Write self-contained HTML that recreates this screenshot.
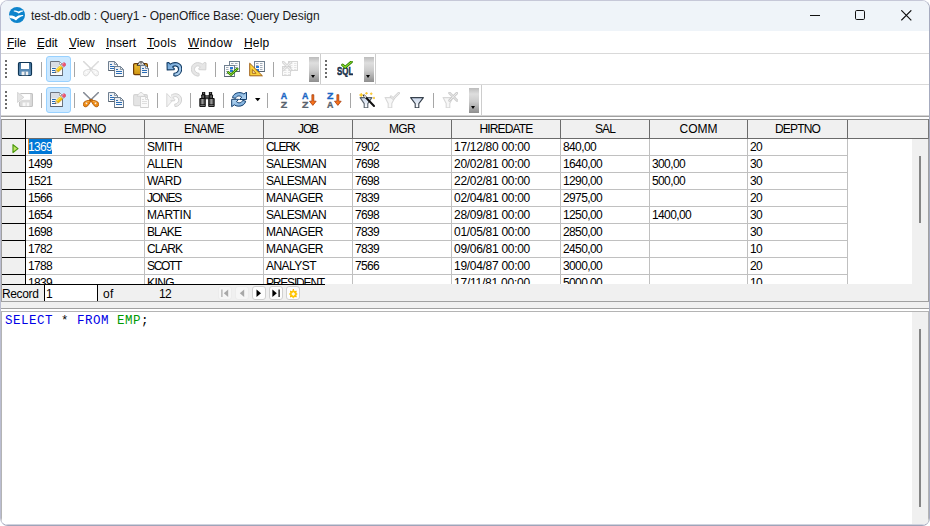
<!DOCTYPE html>
<html>
<head>
<meta charset="utf-8">
<title>test-db.odb : Query1 - OpenOffice Base: Query Design</title>
<style>
*{box-sizing:border-box;margin:0;padding:0}
html,body{width:930px;height:526px;overflow:hidden;background:#fff}
body{font-family:"Liberation Sans",sans-serif;font-size:12px;color:#000;position:relative}
.abs{position:absolute}
#win{position:absolute;left:0;top:0;width:930px;height:526px;border:1px solid #bdc0d3;border-color:#c6c8d8 #a6abbf #9fa4b9 #babdd1;border-radius:8px;overflow:hidden;background:#fff}
#in{position:absolute;left:-1px;top:-1px;width:930px;height:526px}
#title{position:absolute;left:0;top:0;width:930px;height:31px;background:#eff4f9}
.tx{position:absolute;white-space:nowrap;line-height:14px;font-size:12px;height:14px}
.hl{position:absolute;height:1px}
.vl{position:absolute;width:1px}
.tbtn{position:absolute;width:25px;height:26px;border:1px solid #98d1ff;background:#cce8ff;border-radius:3px}
.sep{position:absolute;width:1px;height:15px;background:#a6a6a6}
.dot{position:absolute;width:2px;height:2px;background:#6c6c6c}
.more{position:absolute;width:10px;height:25px;background:linear-gradient(#bcbcbc,#dedede 24%,#cbcbcb 55%,#8e8e8e)}
.more i{position:absolute;left:1.6px;top:18px;width:0;height:0;border-left:2.8px solid transparent;border-right:2.8px solid transparent;border-top:3px solid #000}
.hd{position:absolute;top:120px;height:18px;background:#f0f0f0;border-right:1px solid #6b6b6b;text-align:center;line-height:18px;font-size:12px;white-space:nowrap;padding-top:0}
.nb{position:absolute;top:286px;width:14px;height:14px;border-radius:3px}
.nb.en{background:#fdfdfd;border:1px solid #d0d0d0}
.nb.dis{background:#f6f6f6;border:1px solid #ececec}
#sqlt{position:absolute;left:5px;top:313px;font-family:"Liberation Mono",monospace;font-size:12.5px;letter-spacing:0.5px;line-height:16px;white-space:pre}
</style>
</head>
<body>
<div id="win"><div id="in">
<svg width="0" height="0" style="position:absolute"><defs>
<linearGradient id="gBlue" x1="0" y1="0" x2="0" y2="1"><stop offset="0" stop-color="#3f6f98"/><stop offset="1" stop-color="#6b9cc6"/></linearGradient>
<linearGradient id="gUndo" x1="0" y1="0" x2="1" y2="1"><stop offset="0" stop-color="#6aa2d6"/><stop offset="1" stop-color="#bcdaf4"/></linearGradient>
<linearGradient id="gGold" x1="0" y1="0" x2="0" y2="1"><stop offset="0" stop-color="#f0c23a"/><stop offset="1" stop-color="#cf9410"/></linearGradient>
<linearGradient id="gMore" x1="0" y1="0" x2="0" y2="1"><stop offset="0" stop-color="#9a9a9a"/><stop offset="0.55" stop-color="#d2d2d2"/><stop offset="1" stop-color="#858585"/></linearGradient>
<linearGradient id="gDoc" x1="0" y1="0" x2="0" y2="1"><stop offset="0" stop-color="#e4e8ee"/><stop offset="1" stop-color="#ffffff"/></linearGradient>
<linearGradient id="gFun" x1="0" y1="0" x2="0" y2="1"><stop offset="0" stop-color="#c9d6ea"/><stop offset="1" stop-color="#ffffff"/></linearGradient>
<linearGradient id="gBino" x1="0" y1="0" x2="1" y2="0"><stop offset="0" stop-color="#3a3a3a"/><stop offset="0.45" stop-color="#9c9c9c"/><stop offset="1" stop-color="#3c3c3c"/></linearGradient>
</defs></svg>
<div id="title"></div>
<svg class="abs" style="left:9px;top:7px" width="16" height="16" viewBox="0 0 16 16" ><clipPath id="lc"><circle cx="8" cy="8" r="8"/></clipPath><circle cx="8" cy="8" r="8" fill="#0e84cc"/><g clip-path="url(#lc)"><path d="M4.800 3.600C6.600 3.500 8.200 3.900 9.300 4.600 10.400 3.900 12 3.400 14.100 3.500L14 4.400C12.400 4.700 10.900 5.400 9.600 6.600 8.600 5.500 6.900 4.700 4.800 4.500z" fill="#fff"/><path d="M-0.500 8.600C2.500 8.100 5.400 8.700 6.800 10.200 8.600 8.600 11 7.800 14.300 8.100L14 9C11.800 9.500 9.400 10.900 7 13.400 5.400 11.900 2.600 11 -0.500 10.900z" fill="#fff"/></g></svg>
<span class="tx" style="left:31px;top:9px;letter-spacing:-0.053px;color:#1b1b1b">test-db.odb : Query1 - OpenOffice Base: Query Design</span>
<svg class="abs" style="left:810px;top:15px" width="10" height="1" viewBox="0 0 10 1" ><path d="M0 .5h10" stroke="#111" stroke-width="1"/></svg>
<svg class="abs" style="left:855px;top:10px" width="10" height="10" viewBox="0 0 10 10" ><rect x=".5" y=".5" width="9" height="9" rx="1.200" fill="none" stroke="#111" stroke-width="1"/></svg>
<svg class="abs" style="left:901px;top:10px" width="11" height="11" viewBox="0 0 11 11" ><path d="M.3 .3 10.300 10.300M10.300 .3 .3 10.300" stroke="#111" stroke-width="1.200"/></svg>
<span class="tx" style="left:7px;top:36px;letter-spacing:-0.059px">File</span>
<div class="hl" style="left:7px;top:48px;width:7px;background:#000"></div>
<span class="tx" style="left:37px;top:36px;letter-spacing:-0.019px">Edit</span>
<div class="hl" style="left:37px;top:48px;width:7px;background:#000"></div>
<span class="tx" style="left:69px;top:36px;letter-spacing:-0.048px">View</span>
<div class="hl" style="left:69px;top:48px;width:7px;background:#000"></div>
<span class="tx" style="left:106px;top:36px;letter-spacing:-0.002px">Insert</span>
<div class="hl" style="left:106px;top:48px;width:3px;background:#000"></div>
<span class="tx" style="left:147px;top:36px;letter-spacing:0.317px">Tools</span>
<div class="hl" style="left:147px;top:48px;width:7px;background:#000"></div>
<span class="tx" style="left:188px;top:36px;letter-spacing:0.303px">Window</span>
<div class="hl" style="left:188px;top:48px;width:11px;background:#000"></div>
<span class="tx" style="left:244px;top:36px;letter-spacing:0.205px">Help</span>
<div class="hl" style="left:244px;top:48px;width:8px;background:#000"></div>
<div class="hl" style="left:1px;top:53px;width:928px;background:#d9d9d9"></div>
<div class="hl" style="left:1px;top:84px;width:928px;background:#d9d9d9"></div>
<div class="hl" style="left:1px;top:115px;width:928px;background:#d4d4d4"></div>
<div class="hl" style="left:1px;top:116px;width:928px;background:#a0a0a0"></div>
<div class="vl" style="left:320px;top:54px;height:30px;background:#cdcdcd"></div>
<div class="vl" style="left:375px;top:54px;height:30px;background:#cdcdcd"></div>
<div class="vl" style="left:481px;top:85px;height:30px;background:#cdcdcd"></div>
<div class="dot" style="left:5px;top:60px"></div>
<div class="dot" style="left:5px;top:64px"></div>
<div class="dot" style="left:5px;top:68px"></div>
<div class="dot" style="left:5px;top:72px"></div>
<div class="dot" style="left:5px;top:76px"></div>
<svg class="abs" style="left:17px;top:61px" width="16" height="16" viewBox="0 0 16 16" ><rect x="1.5" y="1.5" width="13" height="13" rx="1.2" fill="url(#gBlue)" stroke="#0f3554" stroke-width="1.2"/>
<rect x="4" y="2" width="8" height="6" fill="#fff"/>
<rect x="4.6" y="10.6" width="6.6" height="3.6" fill="#f2f2f2"/>
<rect x="7.6" y="10.6" width="1" height="3.6" fill="#3d6d96"/></svg>
<div class="sep" style="left:41px;top:62px"></div>
<div class="tbtn" style="left:46px;top:56px"></div>
<svg class="abs" style="left:50px;top:61px" width="16" height="16" viewBox="0 0 16 16" ><path d="M0.500 0.500h9l3 3v11H0.500z" fill="#f9fafb" stroke="#6d7480"/>
<path d="M1 1h8v5.500H1z" fill="#d9dde4"/>
<path d="M9.500 0.500v3h3z" fill="#fff" stroke="#8a909a" stroke-width=".7"/>
<path d="M0.300 14.500h12.400" stroke="#59606b" stroke-width="1.200"/>
<path d="M2 7.500h3.800M2 9.500h3.500M2 11.500h3" stroke="#2468b2" stroke-width="1.100"/><path d="M5.00 11.70 6.04 8.39 8.40 10.98z" fill="#ecdcb8" stroke="#b89a60" stroke-width=".4"/><path d="M5.00 11.70 5.38 10.48 6.25 11.44z" fill="#111"/><path d="M6.04 8.39 10.63 4.21 12.98 6.80 8.40 10.98z" fill="#f2bd00" stroke="#b88600" stroke-width=".4"/><path d="M7.29 9.75 11.87 5.58 11.74 5.43 7.15 9.61z" fill="none"/><path d="M6.18 8.53 10.76 4.36 11.67 5.36 7.08 9.53z" fill="#ffe24a"/><path d="M10.63 4.21 11.66 3.27 14.02 5.86 12.98 6.80z" fill="#eef0f3" stroke="#9aa0a8" stroke-width=".4"/><path d="M11.14 3.74 13.50 6.33" stroke="#8a9098" stroke-width=".5"/><path d="M11.66 3.27 13.14 1.93 Q14.10 1.05 15.28 2.34 Q16.46 3.64 15.50 4.51 L14.02 5.86z" fill="#ee5573" stroke="#c83a58" stroke-width=".4"/><path d="M12.22 3.44 13.77 2.03" stroke="#f8a0b2" stroke-width=".8" stroke-linecap="round"/></svg>
<div class="sep" style="left:74px;top:62px"></div>
<svg class="abs" style="left:83px;top:61px" width="16" height="16" viewBox="0 0 16 16" ><path d="M0.300 0.300 8.300 8" stroke="#d9d9d9" stroke-width="1.600" stroke-linecap="round"/>
<path d="M15.700 0.300 7.700 8" stroke="#dcdcdc" stroke-width="1.600" stroke-linecap="round"/>
<path d="M9.300 7.600C7.800 9.400 6.400 11.300 5.600 12.700 4.600 14.400 2.700 15.300 1.300 14.500 -0.200 13.600 -0.200 11.500 1.100 10.200 2.600 8.700 5.400 8.600 7.200 8.100z" fill="#f3f3f3" stroke="#d4d4d4" stroke-width=".9" stroke-linejoin="round"/>
<path d="M6.700 7.600C8.200 9.400 9.600 11.300 10.400 12.700 11.400 14.400 13.300 15.300 14.700 14.500 16.200 13.600 16.200 11.500 14.900 10.200 13.400 8.700 10.600 8.600 8.800 8.100z" fill="#f3f3f3" stroke="#d4d4d4" stroke-width=".9" stroke-linejoin="round"/>
<path d="M1.800 11.200C2.800 9.900 4.600 9.600 6 9.300" fill="none" stroke="#fafafa" stroke-width=".8"/>
<path d="M14.200 11.200C13.200 9.900 11.400 9.600 10 9.300" fill="none" stroke="#fafafa" stroke-width=".8"/>
<circle cx="3.500" cy="11.400" r=".9" fill="#ffffff"/><circle cx="12.500" cy="11.400" r=".9" fill="#ffffff"/></svg>
<svg class="abs" style="left:108px;top:61px" width="16" height="16" viewBox="0 0 16 16" ><path d="M0.5 0.5h6l3 3v6h-9z" fill="url(#gDoc)" stroke="#6f7f90"/>
<path d="M6.5 0.5v3h3" fill="none" stroke="#6f7f90" stroke-width=".8"/>
<path d="M0.5 9.5h9" stroke="#55606c"/>
<path d="M2 3.5h2M2 5.5h6M2 7.5h6" stroke="#2a6cb4"/><path d="M6.5 5.5h6l3 3v7h-9z" fill="url(#gDoc)" stroke="#6f7f90"/>
<path d="M12.5 5.5v3h3" fill="none" stroke="#6f7f90" stroke-width=".8"/>
<path d="M6.5 15.5h9" stroke="#55606c"/>
<path d="M8 8.5h2M8 10.5h6M8 12.5h6" stroke="#2a6cb4"/></svg>
<svg class="abs" style="left:133px;top:61px" width="16" height="16" viewBox="0 0 16 16" ><rect x="0.600" y="2.600" width="13.800" height="11" rx="1.300" fill="url(#gGold)" stroke="#6e3c08" stroke-width="1.200"/>
<path d="M4 4.300 5.500 2.300 6.500 0.800h3L10.500 2.300 12 4.300z" fill="#e8e8e8" stroke="#222" stroke-width=".9"/>
<circle cx="8" cy="2" r=".7" fill="#222"/><path d="M7.5 4.5h5l3 3v8h-8z" fill="url(#gDoc)" stroke="#6f7f90"/>
<path d="M12.5 4.5v3h3" fill="none" stroke="#6f7f90" stroke-width=".8"/>
<path d="M7.5 15.5h8" stroke="#55606c"/>
<path d="M9 7.5h2M9 9.5h5M9 11.5h5" stroke="#2a6cb4"/></svg>
<div class="sep" style="left:157px;top:62px"></div>
<svg class="abs" style="left:166px;top:61px" width="16" height="16" viewBox="0 0 16 16" ><path transform="translate(0 .7) scale(1 .95)" d="M1 1.200 2.800 0.800 4.300 2.600C6 1.300 8.500 0.600 11 1.200 14.200 2.200 16 5.200 15.700 8.500 15.300 12.200 12.500 15 9 15.200L7.800 14.600 8 12.200C10.500 12 12.300 10.500 12.500 8.200 12.600 6.200 11.200 4.600 9.500 4.400 8.300 4.300 7.300 4.800 6.600 5.400L8.400 7.500 8 8.400 1.200 8.600z" fill="url(#gUndo)" stroke="#103a64" stroke-width="1.100" stroke-linejoin="round"/></svg>
<svg class="abs" style="left:191px;top:61px" width="16" height="16" viewBox="0 0 16 16" ><g transform="translate(16,.7) scale(-1,.95)"><path d="M1 1.200 2.800 0.800 4.300 2.600C6 1.300 8.500 0.600 11 1.200 14.200 2.200 16 5.200 15.700 8.500 15.300 12.200 12.500 15 9 15.200L7.800 14.600 8 12.200C10.500 12 12.300 10.500 12.500 8.200 12.600 6.200 11.200 4.600 9.500 4.400 8.300 4.300 7.300 4.800 6.600 5.400L8.400 7.500 8 8.400 1.200 8.600z" fill="#e6e6e6" stroke="#d2d2d2" stroke-width="1" stroke-linejoin="round"/></g></svg>
<div class="sep" style="left:215px;top:62px"></div>
<svg class="abs" style="left:224px;top:61px" width="16" height="16" viewBox="0 0 16 16" ><rect x="5.5" y="0.5" width="10" height="10" fill="#fbfcfd" stroke="#708090"/><path d="M5.5 10.5h10" stroke="#56626e" /><path d="M7 2.5h2.500M11 2.5h2.500" stroke="#9aa4b0" stroke-width=".9"/><path d="M7 4.5h2.500M11 4.5h2.500" stroke="#9aa4b0" stroke-width=".9"/><path d="M7 6.5h2.500M11 6.5h2.500" stroke="#9aa4b0" stroke-width=".9"/><path d="M7 8.5h2.500M11 8.5h2.500" stroke="#9aa4b0" stroke-width=".9"/><rect x="0.5" y="4.5" width="10" height="11" fill="#fbfcfd" stroke="#708090"/><path d="M0.5 15.5h10" stroke="#56626e" /><path d="M2 6.5h2.500M6 6.5h2.500" stroke="#9aa4b0" stroke-width=".9"/><path d="M2 8.5h2.500M6 8.5h2.500" stroke="#9aa4b0" stroke-width=".9"/><path d="M2 10.5h2.500M6 10.5h2.500" stroke="#9aa4b0" stroke-width=".9"/><path d="M2 12.5h2.500M6 12.5h2.500" stroke="#9aa4b0" stroke-width=".9"/><rect x="6" y="6" width="3" height="2" fill="#2a78d8"/><rect x="6" y="9" width="3" height="2" fill="#2a78d8"/><path d="M4.300 11.300 6.900 13.700 13.300 7.900" fill="none" stroke="#2f8000" stroke-width="2.500" stroke-linecap="round" stroke-linejoin="round"/><path d="M4.300 11.300 6.900 13.700 13.300 7.900" fill="none" stroke="#9ae03a" stroke-width="1.000" stroke-linecap="round" stroke-linejoin="round"/></svg>
<svg class="abs" style="left:249px;top:61px" width="16" height="16" viewBox="0 0 16 16" ><rect x="5.5" y="0.5" width="10" height="10" fill="#fbfcfd" stroke="#708090"/><path d="M5.5 10.5h10" stroke="#56626e" /><path d="M7 2.5h2.500M11 2.5h2.500" stroke="#9aa4b0" stroke-width=".9"/><path d="M7 4.5h2.500M11 4.5h2.500" stroke="#9aa4b0" stroke-width=".9"/><path d="M7 6.5h2.500M11 6.5h2.500" stroke="#9aa4b0" stroke-width=".9"/><path d="M7 8.5h2.500M11 8.5h2.500" stroke="#9aa4b0" stroke-width=".9"/><rect x="7" y="5" width="3" height="2" fill="#2a78d8"/><rect x="7" y="8" width="3" height="2" fill="#2a78d8"/><path d="M0.700 2.200 0.700 14.800 13.400 14.800z" fill="#fbd23c" stroke="#96520a" stroke-width=".9" stroke-linejoin="round"/><path d="M3.300 8.500 3.300 12.300 7 12.300z" fill="#fdf0b0" stroke="#96520a" stroke-width=".8"/></svg>
<div class="sep" style="left:273px;top:62px"></div>
<svg class="abs" style="left:282px;top:61px" width="16" height="16" viewBox="0 0 16 16" ><rect x="6.5" y="0.5" width="9" height="9" fill="#fbfbfb" stroke="#d6d6d6"/><path d="M8 2.5h2.500M12 2.5h2.500" stroke="#e2e2e2" stroke-width=".9"/><path d="M8 4.5h2.500M12 4.5h2.500" stroke="#e2e2e2" stroke-width=".9"/><path d="M8 6.5h2.500M12 6.5h2.500" stroke="#e2e2e2" stroke-width=".9"/><path d="M8 8.5h2.500M12 8.5h2.500" stroke="#e2e2e2" stroke-width=".9"/><rect x="0.5" y="5.5" width="8" height="9" fill="#fbfbfb" stroke="#d6d6d6"/><path d="M2 7.5h2.500M6 7.5h2.500" stroke="#e2e2e2" stroke-width=".9"/><path d="M2 9.5h2.500M6 9.5h2.500" stroke="#e2e2e2" stroke-width=".9"/><path d="M2 11.5h2.500M6 11.5h2.500" stroke="#e2e2e2" stroke-width=".9"/><path d="M2 13.5h2.500M6 13.5h2.500" stroke="#e2e2e2" stroke-width=".9"/><path d="M1 1 9 9M9 1 1 9" stroke="#cfcfcf" stroke-width="2.600" stroke-linecap="round"/><path d="M1 1 9 9M9 1 1 9" stroke="#ececec" stroke-width="1.100" stroke-linecap="round"/></svg>
<div class="more" style="left:309px;top:57px"><i></i></div>
<div class="dot" style="left:325px;top:60px"></div>
<div class="dot" style="left:325px;top:64px"></div>
<div class="dot" style="left:325px;top:68px"></div>
<div class="dot" style="left:325px;top:72px"></div>
<div class="dot" style="left:325px;top:76px"></div>
<svg class="abs" style="left:337px;top:61px" width="16" height="16" viewBox="0 0 16 16" ><text x="0" y="14.400" font-family="Liberation Sans, sans-serif" font-weight="bold" font-size="10.500" textLength="16.200" lengthAdjust="spacingAndGlyphs" fill="#17304a" stroke="#17304a" stroke-width=".5">SQL</text>
<path d="M5.600 4 8.200 6.300 14.400 0.900" fill="none" stroke="#2a7a00" stroke-width="2.800" stroke-linecap="round" stroke-linejoin="round"/>
<path d="M5.600 4 8.200 6.300 14.400 0.900" fill="none" stroke="#8ad82a" stroke-width="1.200" stroke-linecap="round" stroke-linejoin="round"/></svg>
<div class="more" style="left:364px;top:57px"><i></i></div>
<div class="dot" style="left:5px;top:91px"></div>
<div class="dot" style="left:5px;top:95px"></div>
<div class="dot" style="left:5px;top:99px"></div>
<div class="dot" style="left:5px;top:103px"></div>
<div class="dot" style="left:5px;top:107px"></div>
<svg class="abs" style="left:17px;top:92px" width="16" height="16" viewBox="0 0 16 16" ><rect x="2.500" y="1.500" width="13" height="13" rx="1.200" fill="#dadada" stroke="#c2c2c2" stroke-width="1.100"/>
<rect x="4.700" y="2.100" width="8.400" height="5.700" fill="#fff"/>
<rect x="5.600" y="10.500" width="6.600" height="3.600" fill="#f8f8f8"/>
<rect x="8.600" y="10.500" width="1" height="3.600" fill="#d8d8d8"/>
<path d="M0.400 0.300 6.900 5.300 0.400 10.400z" fill="#e6e6e6" stroke="#fff" stroke-width="1.600" stroke-linejoin="round"/>
<path d="M0.400 0.300 6.900 5.300 0.400 10.400z" fill="#e4e4e4" stroke="#cccccc" stroke-width=".7" stroke-linejoin="round"/></svg>
<div class="sep" style="left:41px;top:93px"></div>
<div class="tbtn" style="left:46px;top:87px"></div>
<svg class="abs" style="left:50px;top:92px" width="16" height="16" viewBox="0 0 16 16" ><path d="M0.500 0.500h9l3 3v11H0.500z" fill="#f9fafb" stroke="#6d7480"/>
<path d="M1 1h8v5.500H1z" fill="#d9dde4"/>
<path d="M9.500 0.500v3h3z" fill="#fff" stroke="#8a909a" stroke-width=".7"/>
<path d="M0.300 14.500h12.400" stroke="#59606b" stroke-width="1.200"/>
<path d="M2 7.500h3.800M2 9.500h3.500M2 11.500h3" stroke="#2468b2" stroke-width="1.100"/><path d="M5.00 11.70 6.04 8.39 8.40 10.98z" fill="#ecdcb8" stroke="#b89a60" stroke-width=".4"/><path d="M5.00 11.70 5.38 10.48 6.25 11.44z" fill="#111"/><path d="M6.04 8.39 10.63 4.21 12.98 6.80 8.40 10.98z" fill="#f2bd00" stroke="#b88600" stroke-width=".4"/><path d="M7.29 9.75 11.87 5.58 11.74 5.43 7.15 9.61z" fill="none"/><path d="M6.18 8.53 10.76 4.36 11.67 5.36 7.08 9.53z" fill="#ffe24a"/><path d="M10.63 4.21 11.66 3.27 14.02 5.86 12.98 6.80z" fill="#eef0f3" stroke="#9aa0a8" stroke-width=".4"/><path d="M11.14 3.74 13.50 6.33" stroke="#8a9098" stroke-width=".5"/><path d="M11.66 3.27 13.14 1.93 Q14.10 1.05 15.28 2.34 Q16.46 3.64 15.50 4.51 L14.02 5.86z" fill="#ee5573" stroke="#c83a58" stroke-width=".4"/><path d="M12.22 3.44 13.77 2.03" stroke="#f8a0b2" stroke-width=".8" stroke-linecap="round"/></svg>
<div class="sep" style="left:74px;top:93px"></div>
<svg class="abs" style="left:83px;top:92px" width="16" height="16" viewBox="0 0 16 16" ><path d="M0.300 0.300 8.300 8" stroke="#868c96" stroke-width="1.600" stroke-linecap="round"/>
<path d="M15.700 0.300 7.700 8" stroke="#868c96" stroke-width="1.600" stroke-linecap="round"/>
<path d="M9.300 7.600C7.800 9.400 6.400 11.300 5.600 12.700 4.600 14.400 2.700 15.300 1.300 14.500 -0.200 13.600 -0.200 11.500 1.100 10.200 2.600 8.700 5.400 8.600 7.200 8.100z" fill="#ef8a12" stroke="#a85400" stroke-width=".9" stroke-linejoin="round"/>
<path d="M6.700 7.600C8.200 9.400 9.600 11.300 10.400 12.700 11.400 14.400 13.300 15.300 14.700 14.500 16.200 13.600 16.200 11.500 14.900 10.200 13.400 8.700 10.600 8.600 8.800 8.100z" fill="#ef8a12" stroke="#a85400" stroke-width=".9" stroke-linejoin="round"/>
<path d="M1.800 11.200C2.800 9.900 4.600 9.600 6 9.300" fill="none" stroke="#ffb64d" stroke-width=".8"/>
<path d="M14.200 11.200C13.200 9.900 11.400 9.600 10 9.300" fill="none" stroke="#ffb64d" stroke-width=".8"/>
<circle cx="3.500" cy="11.400" r=".9" fill="#f3ede4"/><circle cx="12.500" cy="11.400" r=".9" fill="#f3ede4"/></svg>
<svg class="abs" style="left:108px;top:92px" width="16" height="16" viewBox="0 0 16 16" ><path d="M0.5 0.5h6l3 3v6h-9z" fill="url(#gDoc)" stroke="#6f7f90"/>
<path d="M6.5 0.5v3h3" fill="none" stroke="#6f7f90" stroke-width=".8"/>
<path d="M0.5 9.5h9" stroke="#55606c"/>
<path d="M2 3.5h2M2 5.5h6M2 7.5h6" stroke="#2a6cb4"/><path d="M6.5 5.5h6l3 3v7h-9z" fill="url(#gDoc)" stroke="#6f7f90"/>
<path d="M12.5 5.5v3h3" fill="none" stroke="#6f7f90" stroke-width=".8"/>
<path d="M6.5 15.5h9" stroke="#55606c"/>
<path d="M8 8.5h2M8 10.5h6M8 12.5h6" stroke="#2a6cb4"/></svg>
<svg class="abs" style="left:133px;top:92px" width="16" height="16" viewBox="0 0 16 16" ><rect x="0.600" y="2.600" width="13.800" height="11" rx="1.300" fill="#e4e4e4" stroke="#d4d4d4" stroke-width="1.100"/>
<path d="M4 4.300 5.500 2.300 7 0.600h2L10.500 2.300 12 4.300z" fill="#f4f4f4" stroke="#d4d4d4" stroke-width=".9"/><path d="M7.5 4.5h5l3 3v8h-8z" fill="#fafafa" stroke="#d4d4d4"/>
<path d="M12.5 4.5v3h3" fill="none" stroke="#d4d4d4" stroke-width=".8"/>
<path d="M7.5 15.5h8" stroke="#d0d0d0"/>
<path d="M9 7.5h2M9 9.5h5M9 11.5h5" stroke="#dedede"/></svg>
<div class="sep" style="left:157px;top:93px"></div>
<svg class="abs" style="left:166px;top:92px" width="16" height="16" viewBox="0 0 16 16" ><path d="M0.800 1.500 7 8 0.800 15z" fill="#f2f2f2" stroke="#d4d4d4" stroke-width=".9"/>
<path d="M5 3.300C7 1.800 9.600 1.200 12 2.200 14.800 3.400 16 6.200 15.500 9 14.900 12.300 12.200 14.600 9 14.600L8.600 12.200C10.800 12 12.500 10.600 12.700 8.400 12.800 6.400 11.600 4.800 9.800 4.600 8.600 4.500 7.600 4.900 6.900 5.500L9 7.800 8.400 8.800 4.500 8.800" fill="#ececec" stroke="#d2d2d2" stroke-width="1" stroke-linejoin="round"/></svg>
<div class="sep" style="left:190px;top:93px"></div>
<svg class="abs" style="left:199px;top:92px" width="16" height="16" viewBox="0 0 16 16" ><rect x="3" y="0" width="3.200" height="3" rx=".5" fill="#0c0c0c"/><rect x="9.900" y="0" width="3.200" height="3" rx=".5" fill="#0c0c0c"/>
<rect x="4" y=".7" width="1.200" height="1" fill="#8a8a8a"/><rect x="10.900" y=".7" width="1.200" height="1" fill="#8a8a8a"/>
<rect x="2.200" y="2.600" width="4.400" height="4" rx=".6" fill="#141414"/><rect x="9.600" y="2.600" width="4.400" height="4" rx=".6" fill="#141414"/>
<rect x="3.300" y="3.400" width="1.600" height="2.400" fill="#6e6e6e"/><rect x="11.300" y="3.400" width="1.600" height="2.400" fill="#6e6e6e"/>
<rect x="6" y="3.300" width="4.200" height="3.900" fill="#1a1a1a"/>
<path d="M6.600 4.600h3M6.600 6h3" stroke="#8c8c8c" stroke-width=".7"/>
<rect x=".3" y="6" width="6.500" height="9" rx="1" fill="#0e0e0e"/><rect x="9.200" y="6" width="6.500" height="9" rx="1" fill="#0e0e0e"/>
<rect x="1.300" y="7" width="4.500" height="5.300" fill="url(#gBino)"/><rect x="10.200" y="7" width="4.500" height="5.300" fill="url(#gBino)"/>
<rect x="1.300" y="13.100" width="4.500" height="1" fill="#7a7a7a"/><rect x="10.200" y="13.100" width="4.500" height="1" fill="#7a7a7a"/></svg>
<div class="sep" style="left:223px;top:93px"></div>
<svg class="abs" style="left:231px;top:92px" width="16" height="16" viewBox="0 0 16 16" ><path d="M1.500 5.600C2 2.600 5.300 0.300 9 0.600 10.600 0.700 11.900 1.200 12.900 2L15.500 0.100V7.500H8.600L10.700 5.100C9.800 4.200 8.600 3.800 7.400 4 6 4.200 5 5 4.500 6.400z" fill="url(#gUndo)" stroke="#143f6e" stroke-width="1" stroke-linejoin="round"/>
<path d="M1.500 5.600C2 2.600 5.300 0.300 9 0.600 10.600 0.700 11.900 1.200 12.900 2L15.500 0.100V7.500H8.600L10.700 5.100C9.800 4.200 8.600 3.800 7.400 4 6 4.200 5 5 4.500 6.400z" transform="rotate(180 8.100 7.400)" fill="url(#gUndo)" stroke="#143f6e" stroke-width="1" stroke-linejoin="round"/></svg>
<svg class="abs" style="left:255px;top:98px" width="6" height="4" viewBox="0 0 6 4" ><path d="M0 0h5.400L2.700 3.200z" fill="#000"/></svg>
<div class="sep" style="left:267px;top:93px"></div>
<svg class="abs" style="left:276px;top:92px" width="16" height="16" viewBox="0 0 16 16" ><text x="4.8" y="6.800" font-family="Liberation Sans, sans-serif" font-weight="bold" font-size="9.300" textLength="6.400" lengthAdjust="spacingAndGlyphs" fill="#1a66c4" stroke="#1a66c4" stroke-width=".35">A</text>
<text x="4.8" y="15.600" font-family="Liberation Sans, sans-serif" font-weight="bold" font-size="9.300" textLength="6.400" lengthAdjust="spacingAndGlyphs" fill="#59636d" stroke="#59636d" stroke-width=".35">Z</text></svg>
<svg class="abs" style="left:301px;top:92px" width="16" height="16" viewBox="0 0 16 16" ><text x="1.0" y="6.800" font-family="Liberation Sans, sans-serif" font-weight="bold" font-size="9.300" textLength="6.400" lengthAdjust="spacingAndGlyphs" fill="#1a66c4" stroke="#1a66c4" stroke-width=".35">A</text>
<text x="1.0" y="15.600" font-family="Liberation Sans, sans-serif" font-weight="bold" font-size="9.300" textLength="6.400" lengthAdjust="spacingAndGlyphs" fill="#59636d" stroke="#59636d" stroke-width=".35">Z</text><path d="M10.900 2.700h1.900v6.500h2.400L11.850 13.400 8.500 9.200h2.400z" fill="#f8721a" stroke="#9c3000" stroke-width=".7" stroke-linejoin="round"/></svg>
<svg class="abs" style="left:326px;top:92px" width="16" height="16" viewBox="0 0 16 16" ><text x="1.0" y="6.800" font-family="Liberation Sans, sans-serif" font-weight="bold" font-size="9.300" textLength="6.400" lengthAdjust="spacingAndGlyphs" fill="#1a66c4" stroke="#1a66c4" stroke-width=".35">Z</text>
<text x="1.0" y="15.600" font-family="Liberation Sans, sans-serif" font-weight="bold" font-size="9.300" textLength="6.400" lengthAdjust="spacingAndGlyphs" fill="#59636d" stroke="#59636d" stroke-width=".35">A</text><path d="M10.900 2.700h1.900v6.500h2.400L11.850 13.400 8.500 9.200h2.400z" fill="#f8721a" stroke="#9c3000" stroke-width=".7" stroke-linejoin="round"/></svg>
<div class="sep" style="left:350px;top:93px"></div>
<svg class="abs" style="left:359px;top:92px" width="16" height="16" viewBox="0 0 16 16" ><path d="M1.1 5.6h11.8l-4.1000000000000005 6v4.300h-3.600v-4.300z" fill="url(#gFun)" stroke="#5a646e" stroke-width="1.100" stroke-linejoin="round"/><path d="M5 3.500 15 14" stroke="#111" stroke-width="2" stroke-linecap="round"/><path d="M5 3.500 7 5.600" stroke="#ddd" stroke-width="1.600"/><path d="M2.2 1L2.9000000000000004 2.3 4.2 3 2.9000000000000004 3.7 2.2 5 1.5000000000000002 3.7 0.20000000000000018 3 1.5000000000000002 2.3z" fill="#ffd21f" stroke="#e8a400" stroke-width=".3"/><path d="M7.5 0.0L7.955 0.8450000000000001 8.8 1.3 7.955 1.755 7.5 2.6 7.045 1.755 6.2 1.3 7.045 0.8450000000000001z" fill="#ffd21f" stroke="#e8a400" stroke-width=".3"/><path d="M12.2 0.5L12.655 1.3450000000000002 13.5 1.8 12.655 2.255 12.2 3.1 11.745 2.255 10.899999999999999 1.8 11.745 1.3450000000000002z" fill="#ffd21f" stroke="#e8a400" stroke-width=".3"/><path d="M15 4.8L15.42 5.58 16.2 6 15.42 6.42 15 7.2 14.58 6.42 13.8 6 14.58 5.58z" fill="#ffd21f" stroke="#e8a400" stroke-width=".3"/></svg>
<svg class="abs" style="left:384px;top:92px" width="16" height="16" viewBox="0 0 16 16" ><path d="M1.1 5.6h9.8l-3.1000000000000005 6v4.300h-3.600v-4.300z" fill="#f7f7f7" stroke="#d8d8d8" stroke-width="1.100" stroke-linejoin="round"/><path d="M7 4.500 9.200 6.600 15 0.800" fill="none" stroke="#d2d2d2" stroke-width="2.400" stroke-linecap="round" stroke-linejoin="round"/><path d="M7 4.500 9.200 6.600 15 0.800" fill="none" stroke="#f0f0f0" stroke-width="1" stroke-linecap="round"/></svg>
<svg class="abs" style="left:409px;top:92px" width="16" height="16" viewBox="0 0 16 16" ><path d="M1.6 5.6h12.8l-4.6000000000000005 6v4.300h-3.600v-4.300z" fill="url(#gFun)" stroke="#37414d" stroke-width="1.100" stroke-linejoin="round"/></svg>
<div class="sep" style="left:433px;top:93px"></div>
<svg class="abs" style="left:442px;top:92px" width="16" height="16" viewBox="0 0 16 16" ><path d="M1.1 5.6h9.8l-3.1000000000000005 6v4.300h-3.600v-4.300z" fill="#f7f7f7" stroke="#d8d8d8" stroke-width="1.100" stroke-linejoin="round"/><path d="M7.500 1 15 8.500M15 1 7.500 8.500" stroke="#cdcdcd" stroke-width="2.600" stroke-linecap="round"/><path d="M7.500 1 15 8.500M15 1 7.500 8.500" stroke="#ebebeb" stroke-width="1" stroke-linecap="round"/></svg>
<div class="more" style="left:469px;top:88px"><i></i></div>
<div class="abs" style="left:1px;top:119px;width:928px;height:183px;background:#f0f0f0;border:1px solid #a0a0a0;border-top-color:#8c8c8c"></div>
<div class="abs" style="left:26px;top:139px;width:886px;height:145px;background:#fff;overflow:hidden" id="data">
<div class="hl" style="left:0;top:16px;width:822px;background:#c0c0c0"></div>
<div class="hl" style="left:0;top:33px;width:822px;background:#c0c0c0"></div>
<div class="hl" style="left:0;top:50px;width:822px;background:#c0c0c0"></div>
<div class="hl" style="left:0;top:67px;width:822px;background:#c0c0c0"></div>
<div class="hl" style="left:0;top:84px;width:822px;background:#c0c0c0"></div>
<div class="hl" style="left:0;top:101px;width:822px;background:#c0c0c0"></div>
<div class="hl" style="left:0;top:118px;width:822px;background:#c0c0c0"></div>
<div class="hl" style="left:0;top:135px;width:822px;background:#c0c0c0"></div>
<div class="vl" style="left:118px;top:0;height:145px;background:#c0c0c0"></div>
<div class="vl" style="left:237px;top:0;height:145px;background:#c0c0c0"></div>
<div class="vl" style="left:326px;top:0;height:145px;background:#c0c0c0"></div>
<div class="vl" style="left:425px;top:0;height:145px;background:#c0c0c0"></div>
<div class="vl" style="left:534px;top:0;height:145px;background:#c0c0c0"></div>
<div class="vl" style="left:623px;top:0;height:145px;background:#c0c0c0"></div>
<div class="vl" style="left:721px;top:0;height:145px;background:#c0c0c0"></div>
<div class="vl" style="left:821px;top:0;height:145px;background:#c0c0c0"></div>
<div class="abs" style="left:2px;top:0;width:1px;height:15px;background:#f0902a"></div>
<div class="abs" style="left:3px;top:0;width:23px;height:15px;background:#0078d7"></div>
<span class="tx" style="left:2px;top:1px;letter-spacing:-0.674px;color:#fff">1369</span>
<span class="tx" style="left:121px;top:1px;letter-spacing:-0.466px">SMITH</span>
<span class="tx" style="left:240px;top:1px;letter-spacing:-1.403px">CLERK</span>
<span class="tx" style="left:329px;top:1px;letter-spacing:-0.674px">7902</span>
<span class="tx" style="left:428px;top:1px;letter-spacing:-0.291px">17/12/80 00:00</span>
<span class="tx" style="left:537px;top:1px;letter-spacing:-0.617px">840,00</span>
<span class="tx" style="left:724px;top:1px;letter-spacing:-0.674px">20</span>
<span class="tx" style="left:2px;top:18px;letter-spacing:-0.674px">1499</span>
<span class="tx" style="left:121px;top:18px;letter-spacing:-0.604px">ALLEN</span>
<span class="tx" style="left:240px;top:18px;letter-spacing:-0.669px">SALESMAN</span>
<span class="tx" style="left:329px;top:18px;letter-spacing:-0.674px">7698</span>
<span class="tx" style="left:428px;top:18px;letter-spacing:-0.291px">20/02/81 00:00</span>
<span class="tx" style="left:537px;top:18px;letter-spacing:-0.625px">1640,00</span>
<span class="tx" style="left:626px;top:18px;letter-spacing:-0.617px">300,00</span>
<span class="tx" style="left:724px;top:18px;letter-spacing:-0.674px">30</span>
<span class="tx" style="left:2px;top:35px;letter-spacing:-0.674px">1521</span>
<span class="tx" style="left:121px;top:35px;letter-spacing:-0.554px">WARD</span>
<span class="tx" style="left:240px;top:35px;letter-spacing:-0.669px">SALESMAN</span>
<span class="tx" style="left:329px;top:35px;letter-spacing:-0.674px">7698</span>
<span class="tx" style="left:428px;top:35px;letter-spacing:-0.291px">22/02/81 00:00</span>
<span class="tx" style="left:537px;top:35px;letter-spacing:-0.625px">1290,00</span>
<span class="tx" style="left:626px;top:35px;letter-spacing:-0.617px">500,00</span>
<span class="tx" style="left:724px;top:35px;letter-spacing:-0.674px">30</span>
<span class="tx" style="left:2px;top:52px;letter-spacing:-0.674px">1566</span>
<span class="tx" style="left:121px;top:52px;letter-spacing:-1.202px">JONES</span>
<span class="tx" style="left:240px;top:52px;letter-spacing:-0.525px">MANAGER</span>
<span class="tx" style="left:329px;top:52px;letter-spacing:-0.674px">7839</span>
<span class="tx" style="left:428px;top:52px;letter-spacing:-0.291px">02/04/81 00:00</span>
<span class="tx" style="left:537px;top:52px;letter-spacing:-0.625px">2975,00</span>
<span class="tx" style="left:724px;top:52px;letter-spacing:-0.674px">20</span>
<span class="tx" style="left:2px;top:69px;letter-spacing:-0.674px">1654</span>
<span class="tx" style="left:121px;top:69px;letter-spacing:-0.297px">MARTIN</span>
<span class="tx" style="left:240px;top:69px;letter-spacing:-0.669px">SALESMAN</span>
<span class="tx" style="left:329px;top:69px;letter-spacing:-0.674px">7698</span>
<span class="tx" style="left:428px;top:69px;letter-spacing:-0.291px">28/09/81 00:00</span>
<span class="tx" style="left:537px;top:69px;letter-spacing:-0.625px">1250,00</span>
<span class="tx" style="left:626px;top:69px;letter-spacing:-0.625px">1400,00</span>
<span class="tx" style="left:724px;top:69px;letter-spacing:-0.674px">30</span>
<span class="tx" style="left:2px;top:86px;letter-spacing:-0.674px">1698</span>
<span class="tx" style="left:121px;top:86px;letter-spacing:-0.938px">BLAKE</span>
<span class="tx" style="left:240px;top:86px;letter-spacing:-0.525px">MANAGER</span>
<span class="tx" style="left:329px;top:86px;letter-spacing:-0.674px">7839</span>
<span class="tx" style="left:428px;top:86px;letter-spacing:-0.291px">01/05/81 00:00</span>
<span class="tx" style="left:537px;top:86px;letter-spacing:-0.625px">2850,00</span>
<span class="tx" style="left:724px;top:86px;letter-spacing:-0.674px">30</span>
<span class="tx" style="left:2px;top:103px;letter-spacing:-0.674px">1782</span>
<span class="tx" style="left:121px;top:103px;letter-spacing:-1.003px">CLARK</span>
<span class="tx" style="left:240px;top:103px;letter-spacing:-0.525px">MANAGER</span>
<span class="tx" style="left:329px;top:103px;letter-spacing:-0.674px">7839</span>
<span class="tx" style="left:428px;top:103px;letter-spacing:-0.291px">09/06/81 00:00</span>
<span class="tx" style="left:537px;top:103px;letter-spacing:-0.625px">2450,00</span>
<span class="tx" style="left:724px;top:103px;letter-spacing:-0.674px">10</span>
<span class="tx" style="left:2px;top:120px;letter-spacing:-0.674px">1788</span>
<span class="tx" style="left:121px;top:120px;letter-spacing:-1.333px">SCOTT</span>
<span class="tx" style="left:240px;top:120px;letter-spacing:-0.542px">ANALYST</span>
<span class="tx" style="left:329px;top:120px;letter-spacing:-0.674px">7566</span>
<span class="tx" style="left:428px;top:120px;letter-spacing:-0.291px">19/04/87 00:00</span>
<span class="tx" style="left:537px;top:120px;letter-spacing:-0.625px">3000,00</span>
<span class="tx" style="left:724px;top:120px;letter-spacing:-0.674px">20</span>
<span class="tx" style="left:2px;top:137px;letter-spacing:-0.674px">1839</span>
<span class="tx" style="left:121px;top:137px;letter-spacing:-0.585px">KING</span>
<span class="tx" style="left:240px;top:137px;letter-spacing:-1.186px">PRESIDENT</span>
<span class="tx" style="left:428px;top:137px;letter-spacing:-0.227px">17/11/81 00:00</span>
<span class="tx" style="left:537px;top:137px;letter-spacing:-0.625px">5000,00</span>
<span class="tx" style="left:724px;top:137px;letter-spacing:-0.674px">10</span>
</div>
<div class="hl" style="left:2px;top:138px;width:927px;background:#6b6b6b"></div>
<div class="vl" style="left:928px;top:119px;height:20px;background:#7a7a7a"></div>
<div class="hd" style="left:26px;width:119px;letter-spacing:-0.401px">EMPNO</div>
<div class="hd" style="left:145px;width:119px;letter-spacing:-0.535px">ENAME</div>
<div class="hd" style="left:264px;width:89px;letter-spacing:-1.113px">JOB</div>
<div class="hd" style="left:353px;width:99px;letter-spacing:-0.665px">MGR</div>
<div class="hd" style="left:452px;width:109px;letter-spacing:-0.848px">HIREDATE</div>
<div class="hd" style="left:561px;width:89px;letter-spacing:-0.894px">SAL</div>
<div class="hd" style="left:650px;width:98px;letter-spacing:0.002px">COMM</div>
<div class="hd" style="left:748px;width:100px;letter-spacing:-0.834px">DEPTNO</div>
<div class="vl" style="left:25px;top:119px;height:165px;background:#000"></div>
<div class="hl" style="left:2px;top:138px;width:24px;background:#000"></div>
<div class="hl" style="left:2px;top:155px;width:24px;background:#000"></div>
<div class="hl" style="left:2px;top:172px;width:24px;background:#000"></div>
<div class="hl" style="left:2px;top:189px;width:24px;background:#000"></div>
<div class="hl" style="left:2px;top:206px;width:24px;background:#000"></div>
<div class="hl" style="left:2px;top:223px;width:24px;background:#000"></div>
<div class="hl" style="left:2px;top:240px;width:24px;background:#000"></div>
<div class="hl" style="left:2px;top:257px;width:24px;background:#000"></div>
<div class="hl" style="left:2px;top:274px;width:24px;background:#000"></div>
<svg class="abs" style="left:12px;top:143px" width="9" height="11" viewBox="0 0 9 11" ><path d="M1 1.700 6 5.600 1 9.500z" fill="#c4e468" stroke="#4a9a0c" stroke-width="1.200" stroke-linejoin="round"/></svg>
<div class="abs" style="left:919px;top:156px;width:2px;height:67px;background:#858585"></div>
<div class="hl" style="left:2px;top:284px;width:323px;background:#000"></div>
<span class="tx" style="left:2px;top:287px;letter-spacing:-0.364px">Record</span>
<div class="abs" style="left:44px;top:285px;width:54px;height:16px;background:#fff;border-left:1px solid #000;border-right:1px solid #000"></div>
<span class="tx" style="left:46px;top:287px;letter-spacing:-0.674px">1</span>
<span class="tx" style="left:103px;top:287px;letter-spacing:0.246px">of</span>
<span class="tx" style="left:159px;top:287px;letter-spacing:-0.674px">12</span>
<div class="nb dis" style="left:218px"></div>
<svg class="abs" style="left:218px;top:286px" width="14" height="14" viewBox="0 0 14 14" ><rect x="3.300" y="3.500" width="1.200" height="7.500" fill="#a8a8a8"/><path d="M10.200 3.500v7.500L5.800 7.250z" fill="#a8a8a8"/></svg>
<div class="nb dis" style="left:235px"></div>
<svg class="abs" style="left:235px;top:286px" width="14" height="14" viewBox="0 0 14 14" ><path d="M9.200 3.500v7.500L4.800 7.250z" fill="#a8a8a8"/></svg>
<div class="nb en" style="left:252px"></div>
<svg class="abs" style="left:252px;top:286px" width="14" height="14" viewBox="0 0 14 14" ><path d="M4.500 3.500v7.500l4.500-3.750z" fill="#000"/></svg>
<div class="nb en" style="left:269px"></div>
<svg class="abs" style="left:269px;top:286px" width="14" height="14" viewBox="0 0 14 14" ><path d="M3.400 3.500v7.500L7.800 7.250z" fill="#000"/><rect x="9.500" y="3.500" width="1.200" height="7.500" fill="#000"/></svg>
<div class="nb en" style="left:286px"></div>
<svg class="abs" style="left:286px;top:286px" width="14" height="14" viewBox="0 0 14 14" ><path d="M7.300 3.600 11.700 8 7.300 12.400 2.900 8z" fill="#ffd21a"/><path d="M4.300 5h6v6h-6z" fill="#ffc400"/><path d="M7.300 6 9.300 8 7.300 10 5.300 8z" fill="#fffbe6"/><path d="M4 4.700h1v1H4zM9.600 4.700h1v1h-1zM4 10.300h1v1H4zM9.600 10.300h1v1h-1zM6.800 3h1v1h-1z" fill="#f5a300"/></svg>
<div class="abs" style="left:1px;top:302px;width:929px;height:6px;background:#f0f0f0"></div>
<div class="hl" style="left:1px;top:308px;width:929px;background:#a0a0a0"></div>
<div class="abs" style="left:1px;top:311px;width:928px;height:214px;background:#fff;border:1px solid #b4b4b4;border-bottom:none"></div>
<div class="abs" style="left:912px;top:312px;width:16px;height:212px;background:#f0f0f0"></div>
<div class="hl" style="left:1px;top:524px;width:928px;background:#cfd2de"></div>
<div class="abs" style="left:919px;top:329px;width:2px;height:178px;background:#858585"></div>
<div id="sqlt"><span style="color:#0000e6">SELECT</span> <span style="color:#000">*</span> <span style="color:#0000e6">FROM</span> <span style="color:#009a00">EMP</span>;</div>
</div></div>
</body>
</html>
